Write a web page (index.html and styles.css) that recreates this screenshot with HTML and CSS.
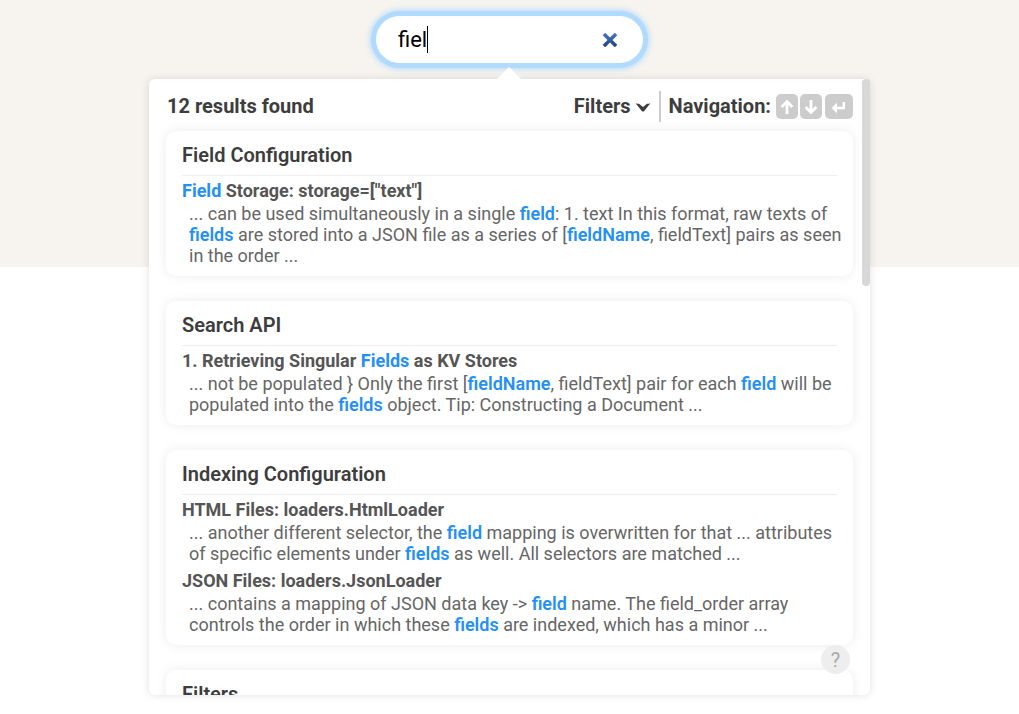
FILE: index.html
```
<!DOCTYPE html>
<html lang="en">
<head>
<meta charset="utf-8">
<title>Search</title>
<link rel="stylesheet" href="styles.css">
</head>
<body>
<header class="search">
  <label class="search-box">
    <input class="search-input" type="text" value="fiel" aria-label="Search">
    <span class="caret"></span>
    <button class="clear" type="button" aria-label="Clear">
      <svg width="16" height="16" viewBox="0 0 16 16"><defs><linearGradient id="blue" x1="0" y1="0" x2="0" y2="1"><stop offset="0" stop-color="#4579c4"/><stop offset="1" stop-color="#243f75"/></linearGradient></defs><path d="M3.2 1 8 5.8 12.8 1 15 3.2 10.2 8 15 12.8 12.8 15 8 10.2 3.2 15 1 12.8 5.8 8 1 3.2z" fill="url(#blue)" stroke="url(#blue)" stroke-width=".6" stroke-linejoin="round"/></svg>
    </button>
  </label>
</header>
<main class="panel">
  <div class="results">
    <div class="toolbar">
      <span class="count">12 results found</span>
      <button class="filters" type="button">Filters
        <svg width="16" height="10" viewBox="0 0 16 10"><path d="M.6 1.2Q2.2 1.8 4 1.8L8 5 12 1.8Q13.8 1.8 15.4 1.2L8.8 9.6H7.2z" fill="#3d3d3d"/></svg>
      </button>
      <div class="navigation">Navigation:
        <span class="keys">
          <button class="key" type="button" aria-label="Up"><svg width="14" height="16" viewBox="0 0 14 16"><path d="M7 15V3M1.6 8 7 2.6 12.4 8" fill="none" stroke="#fff" stroke-width="2.8"/></svg></button>
          <button class="key" type="button" aria-label="Down"><svg width="14" height="16" viewBox="0 0 14 16"><path d="M7 1v12M1.6 8 7 13.4 12.4 8" fill="none" stroke="#fff" stroke-width="2.8"/></svg></button>
          <button class="key key-enter" type="button" aria-label="Enter"><svg width="16" height="14" viewBox="0 0 16 14"><path d="M12.8 2v6H5" fill="none" stroke="#fff" stroke-width="2.6"/><path d="M6 2.8v10.4L.6 8z" fill="#fff"/></svg></button>
        </span>
      </div>
    </div>
    <section class="card">
      <h2 class="card-title">Field Configuration</h2>
      <div class="entry">
        <h3 class="heading"><mark>Field</mark> Storage: storage=["text"]</h3>
        <p class="text">... can be used simultaneously in a single <mark>field</mark>: 1. text In this format, raw texts of <mark>fields</mark> are stored into a JSON file as a series of [<mark>fieldName</mark>, fieldText] pairs as seen in the order ...</p>
      </div>
    </section>
    <section class="card">
      <h2 class="card-title">Search API</h2>
      <div class="entry">
        <h3 class="heading">1. Retrieving Singular <mark>Fields</mark> as KV Stores</h3>
        <p class="text">... not be populated } Only the first [<mark>fieldName</mark>, fieldText] pair for each <mark>field</mark> will be populated into the <mark>fields</mark> object. Tip: Constructing a Document ...</p>
      </div>
    </section>
    <section class="card">
      <h2 class="card-title">Indexing Configuration</h2>
      <div class="entry">
        <h3 class="heading">HTML Files: loaders.HtmlLoader</h3>
        <p class="text">... another different selector, the <mark>field</mark> mapping is overwritten for that ... attributes of specific elements under <mark>fields</mark> as well. All selectors are matched ...</p>
      </div>
      <div class="entry">
        <h3 class="heading">JSON Files: loaders.JsonLoader</h3>
        <p class="text">... contains a mapping of JSON data key -&gt; <mark>field</mark> name. The field_order array controls the order in which these <mark>fields</mark> are indexed, which has a minor ...</p>
      </div>
    </section>
    <section class="card">
      <h2 class="card-title">Filters</h2>
    </section>
  </div>
  <div class="scrollbar"></div>
  <button class="help" type="button" aria-label="Help">?</button>
</main>
</body>
</html>
```
FILE: styles.css
```
* {
  box-sizing: border-box;
}

body {
  margin: 0;
  height: 100vh;
  overflow: hidden;
  display: flex;
  flex-direction: column;
  align-items: center;
  padding: 16px 16px 19px;
  font-family: Roboto, "Liberation Sans", sans-serif;
  color: #3d3d3d;
  background: linear-gradient(#f7f4ef, #f7f4ef) 0 0 / 100% 267px no-repeat #fff;
}

button,
input {
  font: inherit;
  color: inherit;
  border: 0;
  padding: 0;
  background: none;
}

.search {
  width: 267px;
  max-width: 100%;
  flex: none;
  margin-bottom: 16px;
}

.search-box {
  display: flex;
  align-items: center;
  height: 47px;
  padding: 0 25px 0 22px;
  border-radius: 24px;
  background: #fff;
  box-shadow: 0 0 0 5px #b0dbff, 0 0 7px 5px #9fd2ff;
}

.search-input {
  field-sizing: content;
  font-size: 22px;
  color: #000;
  outline: none;
}

.caret {
  width: 1px;
  height: 27px;
  background: #000;
}

.clear {
  display: flex;
  margin-left: auto;
}

.panel {
  position: relative;
  display: flex;
  flex: 1;
  min-height: 0;
  width: 100%;
  max-width: 721px;
  border-radius: 6px;
  background: #fff;
  box-shadow: 0 0 8px rgba(0, 0, 0, 0.12);
}

.panel::before {
  content: "";
  position: absolute;
  left: 50%;
  top: -12px;
  margin-left: -13px;
  border: 12px solid transparent;
  border-top-width: 0;
  border-bottom-color: #fff;
}

.results {
  flex: 1;
  overflow: hidden;
  padding: 12px 9px 0 17px;
  border-radius: 6px 0 0 6px;
}

.toolbar {
  display: flex;
  align-items: center;
  height: 31px;
  margin-bottom: 9px;
  font-size: 20px;
  line-height: 23px;
  font-weight: 700;
}

.count {
  margin-right: auto;
  padding-left: 1px;
}

.filters {
  display: flex;
  align-items: center;
  gap: 4px;
  height: 31px;
  padding-right: 8px;
  border-right: 2px solid #ccc;
}

.navigation {
  display: flex;
  align-items: center;
  gap: 5px;
  padding-left: 8px;
}

.keys {
  display: flex;
  gap: 2px;
}

.key {
  display: flex;
  align-items: center;
  justify-content: center;
  width: 22px;
  height: 25px;
  border-radius: 5px;
  background: #ccc;
}

.key-enter {
  width: 28px;
  margin-left: 1px;
}

.card {
  margin-bottom: 25px;
  padding: 0 10px 10px 16px;
  border-radius: 10px;
  background: #fff;
  box-shadow: 0 0 12px rgba(0, 0, 0, 0.08);
}

.card-title {
  margin: 0 6px 4px 0;
  padding: 12px 0 8px;
  border-bottom: 1px solid #eee;
  font-size: 20px;
  line-height: 24px;
  font-weight: 600;
}

.entry + .entry {
  margin-top: 6px;
}

.heading {
  margin: 0 0 2px;
  font-size: 18px;
  line-height: 21px;
  font-weight: 700;
  color: #555;
}

.text {
  margin: 0;
  padding-left: 7px;
  font-size: 18px;
  line-height: 21px;
  color: #666;
}

mark {
  background: none;
  color: #2490f5;
}

.text mark {
  font-weight: 600;
}

.scrollbar {
  width: 8px;
  height: 207px;
  border-radius: 4px;
  background: #d8d8d8;
}

.help {
  position: absolute;
  right: 20px;
  bottom: 21px;
  width: 29px;
  height: 29px;
  border-radius: 50%;
  background: #eee;
  color: #aaa;
  font-size: 20px;
}
```
